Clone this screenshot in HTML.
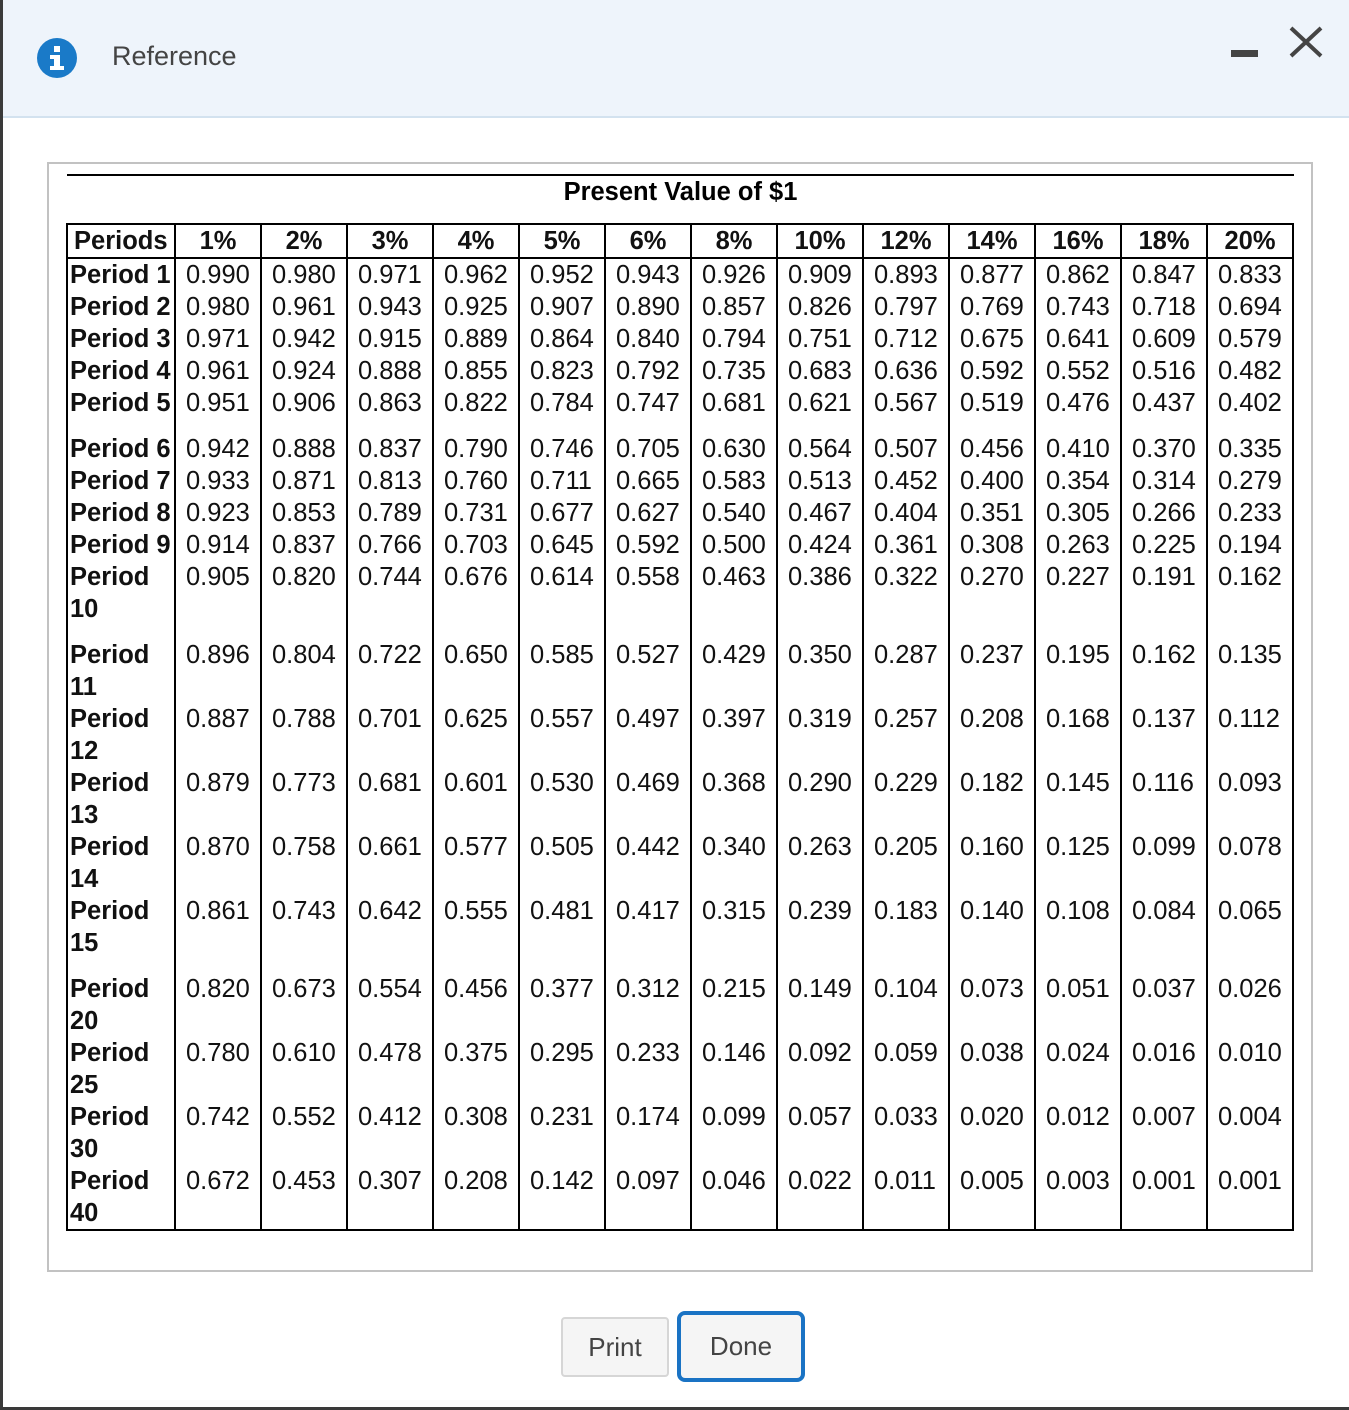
<!DOCTYPE html>
<html><head><meta charset="utf-8"><style>
*{margin:0;padding:0;box-sizing:border-box}
body{width:1349px;height:1410px;position:relative;background:#fff;font-family:"Liberation Sans",Arial,sans-serif;overflow:hidden}
.hdr{position:absolute;left:0;top:0;width:1349px;height:118px;background:#eef4fb;border-bottom:2px solid #d3e2ef}
.lb{position:absolute;left:0;top:0;width:3px;height:1410px;background:#3a3a3a}
.bb{position:absolute;left:0;top:1407px;width:1349px;height:3px;background:#3a3a3a}
.icon{position:absolute;left:37px;top:38px;width:40px;height:40px;border-radius:50%;background:#1a7ac8}
.ttl{position:absolute;left:112px;top:41px;font-size:27px;color:#444}
.min{position:absolute;left:1231px;top:50px;width:27px;height:7px;background:#444}
.box{position:absolute;left:47px;top:162px;width:1266px;height:1110px;border:2px solid #c2c2c2}
.line{position:absolute;left:67px;top:174px;width:1227px;height:2px;background:#000}
.pv{position:absolute;left:67px;top:176px;width:1227px;text-align:center;font:bold 25.5px/32px "Liberation Sans",sans-serif}
table{position:absolute;left:66px;top:223px;width:1228px;border-collapse:collapse;border:2px solid #000;font-size:25.5px;color:#111}
td,th{border-left:2px solid #000;border-right:2px solid #000;padding:0;vertical-align:top;line-height:32px;height:32px}
th{border-bottom:2px solid #000;font-weight:bold;text-align:center;height:33px}
td{padding-left:10px}
td:first-child{padding-left:2px;font-weight:bold}
th:first-child{padding-left:6px;text-align:left}
tr.s td{height:14px;line-height:14px}
tr.d td{height:64px}
.btn{position:absolute;font-size:26px;color:#444;text-align:center}
</style></head><body>
<div class="hdr"></div>
<div class="lb"></div><div class="bb"></div>
<div class="icon"><svg width="40" height="40"><rect x="17" y="8" width="6" height="6" fill="#fff"/><path d="M13 17H23V28H27V32H13V28H17V21H13Z" fill="#fff"/></svg></div>
<div class="ttl">Reference</div>
<div class="min"></div>
<svg style="position:absolute;left:1288px;top:26px" width="36" height="32"><path d="M3 2L33 30M33 2L3 30" stroke="#444" stroke-width="4"/></svg>
<div class="box"></div>
<div class="line"></div>
<div class="pv">Present Value of $1</div>
<table>
<colgroup><col style="width:108px"><col span="13" style="width:86px"></colgroup>
<tr><th>Periods</th><th>1%</th><th>2%</th><th>3%</th><th>4%</th><th>5%</th><th>6%</th><th>8%</th><th>10%</th><th>12%</th><th>14%</th><th>16%</th><th>18%</th><th>20%</th></tr>
<tr><td>Period 1</td><td>0.990</td><td>0.980</td><td>0.971</td><td>0.962</td><td>0.952</td><td>0.943</td><td>0.926</td><td>0.909</td><td>0.893</td><td>0.877</td><td>0.862</td><td>0.847</td><td>0.833</td></tr>
<tr><td>Period 2</td><td>0.980</td><td>0.961</td><td>0.943</td><td>0.925</td><td>0.907</td><td>0.890</td><td>0.857</td><td>0.826</td><td>0.797</td><td>0.769</td><td>0.743</td><td>0.718</td><td>0.694</td></tr>
<tr><td>Period 3</td><td>0.971</td><td>0.942</td><td>0.915</td><td>0.889</td><td>0.864</td><td>0.840</td><td>0.794</td><td>0.751</td><td>0.712</td><td>0.675</td><td>0.641</td><td>0.609</td><td>0.579</td></tr>
<tr><td>Period 4</td><td>0.961</td><td>0.924</td><td>0.888</td><td>0.855</td><td>0.823</td><td>0.792</td><td>0.735</td><td>0.683</td><td>0.636</td><td>0.592</td><td>0.552</td><td>0.516</td><td>0.482</td></tr>
<tr><td>Period 5</td><td>0.951</td><td>0.906</td><td>0.863</td><td>0.822</td><td>0.784</td><td>0.747</td><td>0.681</td><td>0.621</td><td>0.567</td><td>0.519</td><td>0.476</td><td>0.437</td><td>0.402</td></tr>
<tr class="s"><td></td><td></td><td></td><td></td><td></td><td></td><td></td><td></td><td></td><td></td><td></td><td></td><td></td><td></td></tr>
<tr><td>Period 6</td><td>0.942</td><td>0.888</td><td>0.837</td><td>0.790</td><td>0.746</td><td>0.705</td><td>0.630</td><td>0.564</td><td>0.507</td><td>0.456</td><td>0.410</td><td>0.370</td><td>0.335</td></tr>
<tr><td>Period 7</td><td>0.933</td><td>0.871</td><td>0.813</td><td>0.760</td><td>0.711</td><td>0.665</td><td>0.583</td><td>0.513</td><td>0.452</td><td>0.400</td><td>0.354</td><td>0.314</td><td>0.279</td></tr>
<tr><td>Period 8</td><td>0.923</td><td>0.853</td><td>0.789</td><td>0.731</td><td>0.677</td><td>0.627</td><td>0.540</td><td>0.467</td><td>0.404</td><td>0.351</td><td>0.305</td><td>0.266</td><td>0.233</td></tr>
<tr><td>Period 9</td><td>0.914</td><td>0.837</td><td>0.766</td><td>0.703</td><td>0.645</td><td>0.592</td><td>0.500</td><td>0.424</td><td>0.361</td><td>0.308</td><td>0.263</td><td>0.225</td><td>0.194</td></tr>
<tr class="d"><td>Period<br>10</td><td>0.905</td><td>0.820</td><td>0.744</td><td>0.676</td><td>0.614</td><td>0.558</td><td>0.463</td><td>0.386</td><td>0.322</td><td>0.270</td><td>0.227</td><td>0.191</td><td>0.162</td></tr>
<tr class="s"><td></td><td></td><td></td><td></td><td></td><td></td><td></td><td></td><td></td><td></td><td></td><td></td><td></td><td></td></tr>
<tr class="d"><td>Period<br>11</td><td>0.896</td><td>0.804</td><td>0.722</td><td>0.650</td><td>0.585</td><td>0.527</td><td>0.429</td><td>0.350</td><td>0.287</td><td>0.237</td><td>0.195</td><td>0.162</td><td>0.135</td></tr>
<tr class="d"><td>Period<br>12</td><td>0.887</td><td>0.788</td><td>0.701</td><td>0.625</td><td>0.557</td><td>0.497</td><td>0.397</td><td>0.319</td><td>0.257</td><td>0.208</td><td>0.168</td><td>0.137</td><td>0.112</td></tr>
<tr class="d"><td>Period<br>13</td><td>0.879</td><td>0.773</td><td>0.681</td><td>0.601</td><td>0.530</td><td>0.469</td><td>0.368</td><td>0.290</td><td>0.229</td><td>0.182</td><td>0.145</td><td>0.116</td><td>0.093</td></tr>
<tr class="d"><td>Period<br>14</td><td>0.870</td><td>0.758</td><td>0.661</td><td>0.577</td><td>0.505</td><td>0.442</td><td>0.340</td><td>0.263</td><td>0.205</td><td>0.160</td><td>0.125</td><td>0.099</td><td>0.078</td></tr>
<tr class="d"><td>Period<br>15</td><td>0.861</td><td>0.743</td><td>0.642</td><td>0.555</td><td>0.481</td><td>0.417</td><td>0.315</td><td>0.239</td><td>0.183</td><td>0.140</td><td>0.108</td><td>0.084</td><td>0.065</td></tr>
<tr class="s"><td></td><td></td><td></td><td></td><td></td><td></td><td></td><td></td><td></td><td></td><td></td><td></td><td></td><td></td></tr>
<tr class="d"><td>Period<br>20</td><td>0.820</td><td>0.673</td><td>0.554</td><td>0.456</td><td>0.377</td><td>0.312</td><td>0.215</td><td>0.149</td><td>0.104</td><td>0.073</td><td>0.051</td><td>0.037</td><td>0.026</td></tr>
<tr class="d"><td>Period<br>25</td><td>0.780</td><td>0.610</td><td>0.478</td><td>0.375</td><td>0.295</td><td>0.233</td><td>0.146</td><td>0.092</td><td>0.059</td><td>0.038</td><td>0.024</td><td>0.016</td><td>0.010</td></tr>
<tr class="d"><td>Period<br>30</td><td>0.742</td><td>0.552</td><td>0.412</td><td>0.308</td><td>0.231</td><td>0.174</td><td>0.099</td><td>0.057</td><td>0.033</td><td>0.020</td><td>0.012</td><td>0.007</td><td>0.004</td></tr>
<tr class="d"><td>Period<br>40</td><td>0.672</td><td>0.453</td><td>0.307</td><td>0.208</td><td>0.142</td><td>0.097</td><td>0.046</td><td>0.022</td><td>0.011</td><td>0.005</td><td>0.003</td><td>0.001</td><td>0.001</td></tr>
</table>
<div class="btn" style="left:561px;top:1317px;width:108px;height:60px;line-height:56px;background:#f5f5f5;border:2px solid #d6d6d6;border-radius:4px">Print</div>
<div class="btn" style="left:677px;top:1311px;width:128px;height:71px;line-height:63px;background:#f5f5f5;border:4px solid #1a73c4;border-radius:8px">Done</div>
</body></html>
